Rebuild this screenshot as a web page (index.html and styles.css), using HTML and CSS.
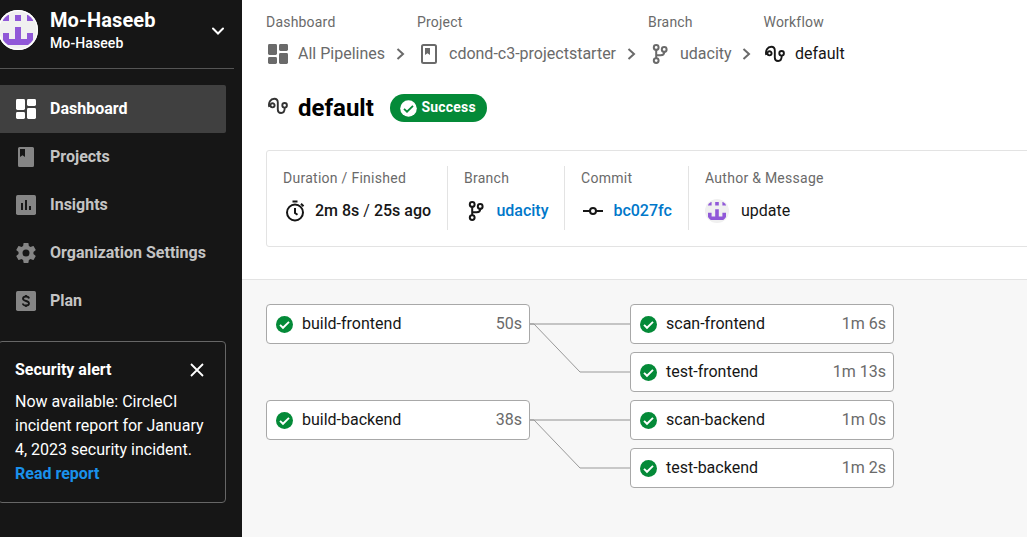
FILE: index.html
```html
<!DOCTYPE html>
<html lang="en">
<head>
<meta charset="utf-8">
<title>default - CircleCI</title>
<link rel="stylesheet" href="styles.css">
</head>
<body>
<svg class="sprite" aria-hidden="true">
  <defs><clipPath id="round"><circle cx="20" cy="20" r="18"/></clipPath></defs>
  <symbol id="dash" viewBox="0 0 20 20"><rect width="9" height="11" rx="1.4"/><rect y="13" width="9" height="7" rx="1.4"/><rect x="11" width="9" height="7" rx="1.4"/><rect x="11" y="9" width="9" height="11" rx="1.4"/></symbol>
  <symbol id="avatar" viewBox="0 0 40 40"><circle cx="20" cy="20" r="20" fill="#f0f0f0"/><g fill="#9058d8" clip-path="url(#round)"><path d="M5 5h6v6H5zM17 5h6v6h-6zM29 5h6v6h-6zM5 23h6v6h6V17h6v12h6v-6h6v12H5z"/></g></symbol>
  <symbol id="branch" viewBox="0 0 20 20"><g fill="none" stroke="currentColor" stroke-width="2"><circle cx="6.2" cy="3.4" r="2.4"/><circle cx="14.2" cy="5.4" r="2.4"/><circle cx="6.2" cy="16.6" r="2.4"/><path d="M6.2 6v8.2M6.2 11.3h4.5q3.5 0 3.5-3.5"/></g></symbol>
  <symbol id="flow" viewBox="0 0 20 20"><g fill="none" stroke="currentColor" stroke-width="1.9"><circle cx="4.500" cy="9.300" r="2.100"/><circle cx="16.600" cy="9.300" r="2.300"/><path d="M1.300 11C.1 6.500 2.500 2.700 6.300 2.700c2.400 0 3.500 1.500 3.500 3.800v7c0 2.200 1.300 3.500 3.300 3.500 2.600 0 3.600-2 3.600-5.300"/></g></symbol>
  <symbol id="chev" viewBox="0 0 10 14"><path d="M1.5 2L7 7l-5.500 5" fill="none" stroke="currentColor" stroke-width="2"/></symbol>
  <symbol id="ok" viewBox="0 0 17 17"><circle cx="8.500" cy="8.500" r="8.500" fill="#048a38"/><path d="M4 8.900l3 2.900L13 5.900" fill="none" stroke="#fff" stroke-width="1.900"/></symbol>
</svg>
<div class="app">
  <aside class="sidebar">
    <div class="account">
      <svg class="account-avatar" viewBox="0 0 40 40"><use href="#avatar" width="40" height="40"/><circle cx="20" cy="20" r="19.400" fill="none" stroke="#fff" stroke-width="1.200"/></svg>
      <div class="account-names"><strong>Mo-Haseeb</strong><span>Mo-Haseeb</span></div>
      <svg class="account-chevron" viewBox="0 0 12 8"><path d="M1 1.500l5 5 5-5" fill="none" stroke="#fff" stroke-width="2" stroke-linecap="round"/></svg>
    </div>
    <nav class="nav">
      <a class="nav-item active"><svg class="nav-icon"><use href="#dash"/></svg>Dashboard</a>
      <a class="nav-item"><svg class="nav-icon" viewBox="0 0 20 20"><path fill-rule="evenodd" d="M3.500 0h13Q18 0 18 1.500v17q0 1.500-1.500 1.500h-13Q2 20 2 18.500v-17Q2 0 3.500 0zM4 2v8l2.500-1.700L9 10V2z"/></svg>Projects</a>
      <a class="nav-item"><svg class="nav-icon" viewBox="0 0 20 20"><rect width="20" height="20" rx="1.700"/><path fill="#161616" d="M5 8h2v7H5zM9 5h2v10H9zM13 11h2v4h-2z"/></svg>Insights</a>
      <a class="nav-item"><svg class="nav-icon" viewBox="2 2 20 20"><path d="M19.430 12.980c.04-.32.070-.64.070-.98s-.03-.66-.07-.98l2.110-1.650c.19-.15.240-.42.120-.64l-2-3.460c-.12-.22-.39-.3-.61-.22l-2.490 1c-.52-.4-1.080-.73-1.690-.98l-.38-2.650C14.460 2.180 14.250 2 14 2h-4c-.25 0-.46.180-.49.420l-.38 2.650c-.61.250-1.170.590-1.690.98l-2.490-1c-.23-.09-.49 0-.61.220l-2 3.460c-.13.220-.07.490.12.640l2.110 1.650c-.04.320-.07.650-.07.980s.03.660.07.980l-2.110 1.650c-.19.150-.24.420-.12.640l2 3.460c.12.220.39.300.61.220l2.490-1c.52.400 1.080.730 1.690.980l.38 2.650c.03.240.24.420.49.420h4c.25 0 .46-.18.490-.42l.38-2.650c.61-.25 1.170-.59 1.690-.98l2.490 1c.23.090.49 0 .61-.22l2-3.460c.12-.22.070-.49-.12-.64zM12 15.500a3.500 3.500 0 1 1 0-7 3.500 3.500 0 0 1 0 7z"/></svg>Organization Settings</a>
      <a class="nav-item"><svg class="nav-icon" viewBox="0 0 20 20"><rect width="20" height="20" rx="1.700"/><path d="M13 7.500Q12.700 5.500 10 5.500T7 7.500Q7 9.300 10 10t3 2.500q0 2-3 2t-3.200-2M10 4v2M10 14v2" fill="none" stroke="#161616" stroke-width="1.800"/></svg>Plan</a>
    </nav>
    <section class="alert">
      <header class="alert-head">Security alert<svg class="alert-close" viewBox="0 0 14 14"><path d="M1 1l12 12M13 1L1 13" stroke="#fff" stroke-width="1.800"/></svg></header>
      <p class="alert-text">Now available: CircleCI incident report for January 4, 2023 security incident.</p>
      <a class="alert-link">Read report</a>
    </section>
  </aside>
  <main class="main">
    <header class="top">
      <div class="crumbs">
        <div class="crumb crumb-all"><span class="label">Dashboard</span><div class="crumb-row"><svg class="icon"><use href="#dash"/></svg><span class="crumb-name">All Pipelines</span><svg class="chev"><use href="#chev"/></svg></div></div>
        <div class="crumb crumb-project"><span class="label">Project</span><div class="crumb-row"><svg class="icon" viewBox="0 0 20 20"><rect x="3" y="1" width="14" height="18" rx="1.500" fill="none" stroke="currentColor" stroke-width="2"/><path d="M6 4h5v7L8.500 9.200 6 11z"/></svg><span class="crumb-name">cdond-c3-projectstarter</span><svg class="chev"><use href="#chev"/></svg></div></div>
        <div class="crumb crumb-branch"><span class="label">Branch</span><div class="crumb-row"><svg class="icon"><use href="#branch"/></svg><span class="crumb-name">udacity</span><svg class="chev"><use href="#chev"/></svg></div></div>
        <div class="crumb current"><span class="label">Workflow</span><div class="crumb-row"><svg class="icon"><use href="#flow"/></svg><span class="crumb-name">default</span></div></div>
      </div>
      <div class="title-row">
        <svg class="title-icon"><use href="#flow"/></svg><h1 class="title">default</h1>
        <span class="badge"><svg class="badge-icon" viewBox="0 0 17 17"><circle cx="8.500" cy="8.500" r="8.300" fill="#fff"/><path d="M4 8.800l3 2.900 6-5.800" fill="none" stroke="#048a38" stroke-width="1.800"/></svg><span class="badge-text">Success</span></span>
      </div>
      <div class="summary">
        <div class="fact fact-duration"><span class="label">Duration / Finished</span><div class="fact-row"><svg class="fact-icon" viewBox="0 0 20 22"><g fill="none" stroke="currentColor" stroke-width="2"><circle cx="10" cy="12.500" r="8"/><path d="M7.500 1.500h5M16 3.700l2.500 2.500M10 8v5l2.500 1.800"/></g></svg><span>2m 8s <i class="slash">/</i> 25s ago</span></div></div>
        <div class="fact fact-branch"><span class="label">Branch</span><div class="fact-row"><svg class="fact-icon"><use href="#branch"/></svg><a class="link">udacity</a></div></div>
        <div class="fact fact-commit"><span class="label">Commit</span><div class="fact-row"><svg class="fact-icon" viewBox="0 0 20 20"><g fill="none" stroke="currentColor" stroke-width="2"><circle cx="10" cy="10" r="3"/><path d="M0 10h7M13 10h7"/></g></svg><a class="link">bc027fc</a></div></div>
        <div class="fact fact-author"><span class="label">Author &amp; Message</span><div class="fact-row"><svg class="author"><use href="#avatar"/></svg><span class="message">update</span></div></div>
      </div>
    </header>
    <section class="graph">
      <div class="column">
        <div class="job"><svg class="ok"><use href="#ok"/></svg><span>build-frontend</span><time>50s</time></div>
        <div class="job job-second"><svg class="ok"><use href="#ok"/></svg><span>build-backend</span><time>38s</time></div>
      </div>
      <svg class="edges" viewBox="0 0 100 184"><g fill="none" stroke-width="1"><path d="M0 19.500h100M0 20.500h100M0 115.500h100M0 116.500h100" stroke="#c4c4c4"/><path d="M0 20h4l46 48h50M0 116h4l46 48h50" stroke="#999"/></g></svg>
      <div class="column">
        <div class="job"><svg class="ok"><use href="#ok"/></svg><span>scan-frontend</span><time>1m 6s</time></div>
        <div class="job"><svg class="ok"><use href="#ok"/></svg><span>test-frontend</span><time>1m 13s</time></div>
        <div class="job"><svg class="ok"><use href="#ok"/></svg><span>scan-backend</span><time>1m 0s</time></div>
        <div class="job"><svg class="ok"><use href="#ok"/></svg><span>test-backend</span><time>1m 2s</time></div>
      </div>
    </section>
  </main>
</div>
</body>
</html>
```
FILE: styles.css
```css
* { box-sizing: border-box; }
body { margin: 0; font: 16px/24px Roboto, sans-serif; color: #161616; overflow: hidden; }
svg { display: block; flex: none; fill: currentColor; }
.sprite { width: 0; height: 0; }
.app { display: flex; width: 1027px; height: 537px; }
.sidebar { width: 242px; flex: none; background: #161616; color: #fff; overflow: hidden; }
.account { display: flex; width: 234px; height: 69px; border-bottom: 1px solid #555; }
.account-avatar { width: 40px; height: 40px; margin: 10px 12px 0 -2px; }
.account-names { display: flex; flex-direction: column; width: 162px; padding-top: 8px; font-size: 14px; font-weight: 500; }
.account-names strong { font-size: 20px; font-weight: 700; line-height: 24px; letter-spacing: .1px; }
.account-names span { line-height: 22px; letter-spacing: .1px; }
.account-chevron { width: 12px; height: 8px; margin-top: 27px; }
.nav { padding-top: 16px; }
.nav-item { display: flex; align-items: center; width: 226px; height: 48px; padding-left: 16px; gap: 14px; font-weight: 700; color: #c4c4c4; border-radius: 0 2px 2px 0; }
.nav-icon { width: 20px; height: 20px; color: #858585; }
.nav-item.active { background: #404040; color: #fff; }
.active .nav-icon { color: #fff; }
.alert { width: 228px; height: 162px; margin: 16px 0 0 -2px; padding: 16px 12px 0 16px; border: 1px solid #666; border-radius: 4px; }
.alert-head { display: flex; justify-content: space-between; font-weight: 700; }
.alert-close { width: 14px; height: 14px; margin: 5px 9px 0 0; }
.alert-text { margin: 8px 0 0; }
.alert-link { color: #1a91eb; font-weight: 700; }
.main { flex: 1; min-width: 0; display: flex; flex-direction: column; overflow: hidden; }
.top { height: 280px; flex: none; padding: 12px 0 0 24px; border-bottom: 1px solid #e3e3e3; }
.crumbs { display: flex; height: 53px; color: #6a6a6a; }
.label { display: block; font-size: 14px; line-height: 20px; letter-spacing: .2px; color: #6a6a6a; white-space: nowrap; }
.fact .label { letter-spacing: .27px; }
.crumb-row { display: flex; align-items: center; height: 24px; margin-top: 10px; padding-left: 2px; white-space: nowrap; }
.icon { width: 20px; height: 20px; }
.crumb-name { margin-left: 10px; }
.chev { width: 10px; height: 14px; margin-left: 11px; }
.crumb-all { width: 151px; }
.crumb-project { width: 231px; }
.crumb-branch { width: 115.5px; }
.crumb-branch .chev { margin-left: 10px; }
.current .crumb-row { color: #161616; padding-left: 1.5px; }
.title-row { display: flex; align-items: center; height: 32px; margin-top: 27px; padding-left: 2px; }
.title-icon { width: 20px; height: 20px; margin-top: -4px; color: #333; }
.title { margin: 0 0 0 10px; font-size: 24px; font-weight: 700; width: 92px; color: #000; }
.badge { display: flex; align-items: center; height: 28px; width: 97px; padding-left: 9.5px; gap: 5px; border-radius: 14px; background: #048a38; color: #fff; font-size: 14px; font-weight: 700; letter-spacing: .2px; }
.badge-text { padding-bottom: 2px; }
.badge-icon { width: 17px; height: 17px; }
.summary { display: flex; width: 790px; height: 97px; margin-top: 26px; padding: 15px 0 0 16px; border: 1px solid #e3e3e3; border-radius: 3px; }
.fact { height: 64px; padding: 2px 0 0 16px; border-left: 1px solid #e3e3e3; }
.fact-duration { width: 164px; padding-left: 0; border-left: 0; }
.fact-branch { width: 117px; }
.fact-commit { width: 124px; }
.fact-row { display: flex; align-items: center; height: 24px; margin-top: 11px; gap: 10px; padding-left: 2px; font-weight: 500; white-space: nowrap; }
.fact-icon { width: 20px; height: 22px; }
.slash { font-style: normal; font-weight: 400; }
.link { color: #0078ca; margin-left: .4px; }
.author { width: 24px; height: 24px; margin-left: -2px; }
.message { font-weight: 400; margin-left: 2px; }
.graph { flex: 1; display: flex; align-items: flex-start; padding: 24px 0 0 24px; background: #f7f7f7; }
.column { display: flex; flex-direction: column; gap: 8px; }
.job { display: flex; align-items: center; width: 264px; height: 40px; padding: 0 7px 0 8.500px; gap: 9.500px; border: 1px solid #a8a8a8; border-radius: 4px; background: #fff; }
.job-second { margin-top: 48px; }
.ok { width: 17px; height: 17px; margin-top: 1px; }
.job time { margin-left: auto; color: #6a6a6a; }
.edges { width: 100px; height: 184px; }
```
